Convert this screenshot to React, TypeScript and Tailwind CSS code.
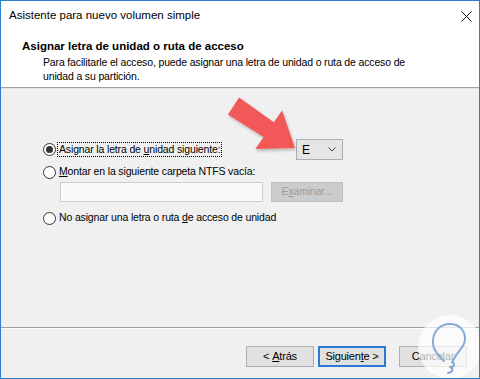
import React from 'react';

const Radio = ({ checked }: { checked?: boolean }) => (
  <span className="flex h-[13px] w-[13px] shrink-0 items-center justify-center rounded-full border border-[#333333] bg-white">
    {checked && <span className="h-[7px] w-[7px] rounded-full bg-[#333333]" />}
  </span>
);

const Btn = ({ children, primary }: { children: React.ReactNode; primary?: boolean }) => (
  <button
    className={
      primary
        ? 'flex h-[21px] w-[68px] items-center justify-center border-2 border-[#2a7ad5] bg-[#e1e1e1] text-[11px] tracking-[-0.2px]'
        : 'flex h-[21px] w-[68px] items-center justify-center border border-[#adadad] bg-[#e1e1e1] text-[11px] tracking-[-0.2px]'
    }
  >
    {children}
  </button>
);

export default function App() {
  return (
    <div className="relative flex h-[379px] w-[480px] flex-col overflow-hidden border border-[#2b7fd2] font-['Liberation_Sans',Arial,sans-serif] text-black">
      {/* Title bar */}
      <div className="flex h-[29px] shrink-0 items-center justify-between bg-white pl-[8px] pr-[7px]">
        <span className="text-[11.5px]">Asistente para nuevo volumen simple</span>
        <svg width="11" height="11" viewBox="0 0 11 11" className="mt-[1px]">
          <path d="M0.5 0.5 L10.5 10.5 M10.5 0.5 L0.5 10.5" stroke="#111" strokeWidth="1" />
        </svg>
      </div>

      {/* Header */}
      <div className="h-[57px] shrink-0 bg-white pl-[21px] pt-[9px]">
        <div className="text-[11.5px] font-bold leading-[14px]">Asignar letra de unidad o ruta de acceso</div>
        <div className="pl-[21px] pt-[2px] text-[10.5px] leading-[14px] tracking-[-0.15px]">
          Para facilitarle el acceso, puede asignar una letra de unidad o ruta de acceso de
          <br />
          unidad a su partición.
        </div>
      </div>
      <div className="h-px shrink-0 bg-[#a0a0a0]" />
      <div className="h-px shrink-0 bg-[#e3e3e3]" />

      {/* Body */}
      <div className="flex-1 bg-[#f0f0f0] pl-[42px] pt-[50px] text-[10.5px] tracking-[-0.15px]">
        <div className="w-[300px]">
          <div className="flex h-[21px] items-center justify-between">
            <div className="flex items-center">
              <Radio checked />
              <span className="ml-[1px] border border-dotted border-black px-[1px] leading-[13px]">
                Asignar la letra de <span className="underline">u</span>nidad siguiente:
              </span>
            </div>
            <div className="flex h-[21px] w-[47px] items-center justify-between border border-[#adadad] bg-[#e5e5e5] pl-[5px] pr-[6px]">
              <span className="text-[12px]">E</span>
              <svg width="8" height="5" viewBox="0 0 8 5">
                <path d="M0.5 0.5 L4 4 L7.5 0.5" fill="none" stroke="#444" strokeWidth="1" />
              </svg>
            </div>
          </div>

          <div className="mt-[5px] flex h-[14px] items-center">
            <Radio />
            <span className="ml-[3px]">
              <span className="underline">M</span>ontar en la siguiente carpeta NTFS vacía:
            </span>
          </div>

          <div className="mt-[3px] flex h-[20px] justify-between pl-[17px]">
            <div className="w-[203px] border border-[#cfcfcf] bg-[#f9f9f9]" />
            <div className="flex w-[72px] items-center justify-center border border-[#bfbfbf] bg-[#cccccc] text-[#9b9b9b]">
              E<span className="underline">x</span>aminar...
            </div>
          </div>

          <div className="mt-[9px] flex h-[14px] items-center">
            <Radio />
            <span className="ml-[3px]">
              No asignar una letra o ruta <span className="underline">d</span>e acceso de unidad
            </span>
          </div>
        </div>
      </div>

      <div className="h-px shrink-0 bg-[#a0a0a0]" />
      <div className="h-px shrink-0 bg-white" />

      {/* Buttons */}
      <div className="flex h-[49px] shrink-0 items-start justify-end bg-[#f0f0f0] pr-[12px] pt-[17px]">
        <Btn>
          {'<\u00a0'}
          <span className="underline">A</span>trás
        </Btn>
        <div className="ml-[4px]">
          <Btn primary>
            Siguien<span className="underline">t</span>e{'\u00a0>'}
          </Btn>
        </div>
        <div className="ml-[13px]">
          <Btn>Cancelar</Btn>
        </div>
      </div>

      {/* Red arrow annotation */}
      <svg className="pointer-events-none absolute left-0 top-0" width="480" height="379">
        <defs>
          <filter id="sh" x="-20%" y="-20%" width="140%" height="140%">
            <feDropShadow dx="1" dy="2" stdDeviation="1.5" floodColor="#000" floodOpacity="0.25" />
          </filter>
        </defs>
        <polygon
          points="226.9,113.4 238.1,96.6 272.8,121.3 281.1,109.5 294,147 254.3,147.9 262.6,136.1"
          fill="#f25858"
          filter="url(#sh)"
        />
      </svg>

      {/* Watermark logo */}
      <svg className="pointer-events-none absolute left-[414px] top-[310px]" width="66" height="69" viewBox="0 0 66 69">
        <circle cx="35" cy="36" r="32" fill="#ffffff" fillOpacity="0.7" />
        <path
          d="M29 50 C24 45 17 39 18 29 C19 19 26 13 35 13 C44 13 50 19 50 28 C50 36 43 40 40 46 L37 51 C41 53 39 56 35 56 C39 58 38 61 33 62"
          fill="none"
          stroke="#6e9ccf"
          strokeWidth="2"
          strokeLinecap="round"
          strokeLinejoin="round"
          opacity="0.85"
        />
      </svg>
    </div>
  );
}
